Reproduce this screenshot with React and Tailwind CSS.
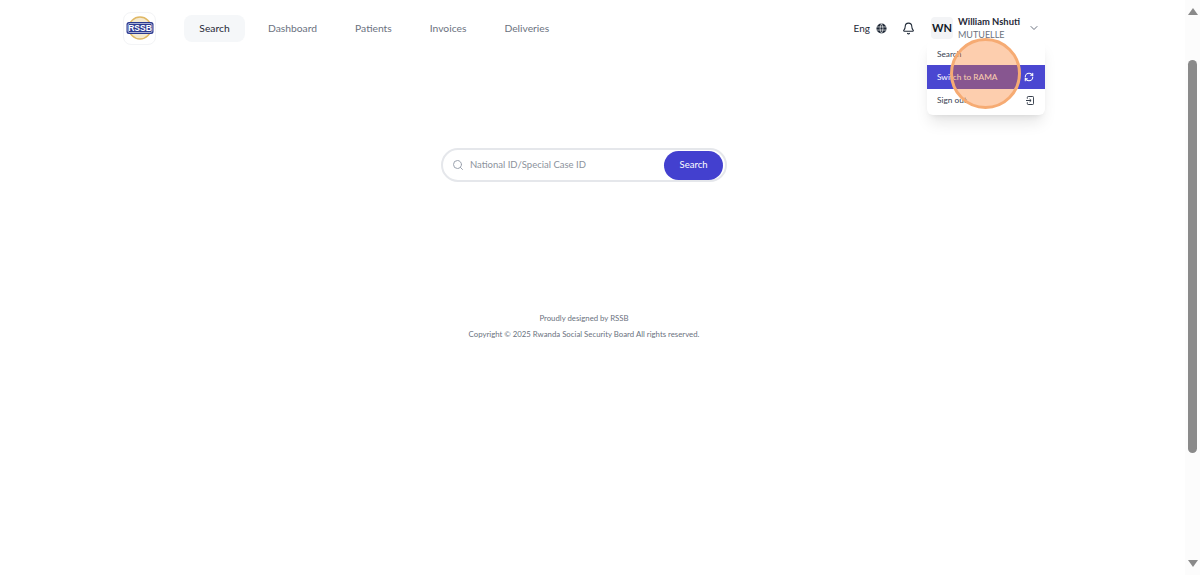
import React from "react";
import { Search, Bell, ChevronDown, RefreshCw } from "lucide-react";

const navItems = ["Dashboard", "Patients", "Invoices", "Deliveries"];

const Logo = () => (
  <div className="w-[33px] h-[33px] rounded-lg border border-gray-100 flex items-center justify-center">
    <svg width="28" height="28" viewBox="0 0 28 28">
      <circle cx="14" cy="14" r="11" fill="#f5ead0" stroke="#e0b865" strokeWidth="1.5" />
      <rect x="0.5" y="8" width="27" height="12" rx="2.5" fill="#2b3990" />
      <rect x="2" y="9.5" width="24" height="9" rx="1.5" fill="none" stroke="#ffffff" strokeWidth="0.6" />
      <text x="14" y="17" textAnchor="middle" fontSize="8.5" fontWeight="700" fill="#ffffff" fontFamily="Liberation Sans, sans-serif">RSSB</text>
    </svg>
  </div>
);

const GlobeFilled = () => (
  <svg width="11" height="11" viewBox="0 0 12 12" className="ml-[6px]">
    <circle cx="6" cy="6" r="5.5" fill="#1f2937" />
    <path d="M1 4.3h10M1 7.7h10M6 .8C4 3.5 4 8.5 6 11.2M6 .8c2 2.7 2 7.7 0 10.4" fill="none" stroke="#ffffff" strokeWidth="0.7" />
  </svg>
);

const SignOutIcon = () => (
  <svg width="8" height="9" viewBox="0 0 9 10" fill="none" stroke="#1f2937" strokeWidth="1">
    <path d="M1.5 3V1.5a1 1 0 0 1 1-1h5a1 1 0 0 1 1 1v7a1 1 0 0 1-1 1h-5a1 1 0 0 1-1-1V7" />
    <path d="M0 5h5.5M4 3.3 5.8 5 4 6.7" />
  </svg>
);

const Scrollbar = () => (
  <div className="w-[15px] h-[575px] bg-[#fcfcfc] flex flex-col items-center">
    <div className="mt-[8px] w-0 h-0 border-x-[5px] border-x-transparent border-b-[7px] border-b-[#8a8a8a]" />
    <div className="mt-[45px] w-[9px] h-[393px] rounded-full bg-[#8a8a8a]" />
    <div className="mt-[107px] w-0 h-0 border-x-[5px] border-x-transparent border-t-[7px] border-t-[#8a8a8a]" />
  </div>
);

export default function App() {
  return (
    <div className="relative w-[1200px] h-[575px] overflow-hidden bg-white flex justify-between font-['Lato',sans-serif] text-[#374151]">
      <div className="w-[1168px] flex flex-col items-center">
        <header className="w-[922px] h-[56px] flex items-center">
          <Logo />
          <nav className="ml-[28px] flex items-center text-[10.3px] text-[#6b7280]">
            <a className="w-[61px] h-[27px] mr-[23px] pt-px rounded-lg bg-[#f5f7f9] text-[#1f2937] flex items-center justify-center">Search</a>
            <div className="flex items-center gap-[38px] pt-px">
              {navItems.map((item) => (
                <a key={item}>{item}</a>
              ))}
            </div>
          </nav>
          <div className="ml-auto relative flex items-center">
            <span className="text-[10px] text-[#1f2937]">Eng</span>
            <GlobeFilled />
            <Bell size={13} className="ml-[15px] text-[#1f2937]" />
            <div className="ml-[16px] w-[22px] h-[22px] rounded bg-[#f3f4f6] flex items-center justify-center text-[11px] font-bold text-[#111827]">WN</div>
            <div className="ml-[5px] w-[70px] leading-none whitespace-nowrap">
              <div className="text-[9.4px] font-bold text-[#1f2937]">William Nshuti</div>
              <div className="mt-[3px] text-[9px] text-[#6b7280]">MUTUELLE</div>
            </div>
            <ChevronDown size={12} className="mr-[5px] text-[#6b7280]" />
            <div className="absolute top-[23px] right-0 w-[118px] h-[75px] rounded-md bg-white shadow-lg flex flex-col text-[8.3px]">
              <div className="h-[25px] pt-[3px] pl-[10px] pr-[11px] flex items-center">Search</div>
              <div className="h-[24px] pl-[10px] pr-[11px] flex items-center justify-between bg-[#4a47d1] text-white">
                Switch to RAMA
                <RefreshCw size={10} strokeWidth={2.5} />
              </div>
              <div className="h-[23px] pl-[10px] pr-[11px] flex items-center justify-between">
                Sign out
                <SignOutIcon />
              </div>
            </div>
          </div>
        </header>

        <main className="mt-[92px] flex flex-col items-center">
          <div className="w-[286px] h-[34px] rounded-full border-2 border-[#e5e7eb] flex items-center pl-[9px] pr-[2px]">
            <Search size={12} className="text-[#9ca3af]" />
            <span className="ml-[6px] text-[9.5px] text-[#8b929c]">National ID/Special Case ID</span>
            <button className="ml-auto w-[59px] h-[29px] rounded-full bg-[#4340cf] text-white text-[9.5px]">Search</button>
          </div>
          <p className="mt-[130px] text-[7.8px] leading-[12px] text-[#6b7280]">Proudly designed by RSSB</p>
          <p className="mt-[4px] text-[7.8px] leading-[12px] text-[#6b7280]">Copyright © 2025 Rwanda Social Security Board All rights reserved.</p>
        </main>
      </div>
      <Scrollbar />

      {/* click highlight */}
      <div className="absolute left-[950px] top-[38px] w-[71px] h-[71px] rounded-full bg-[#f97316]/35 border-[3px] border-[#f6ab73]" />
    </div>
  );
}
